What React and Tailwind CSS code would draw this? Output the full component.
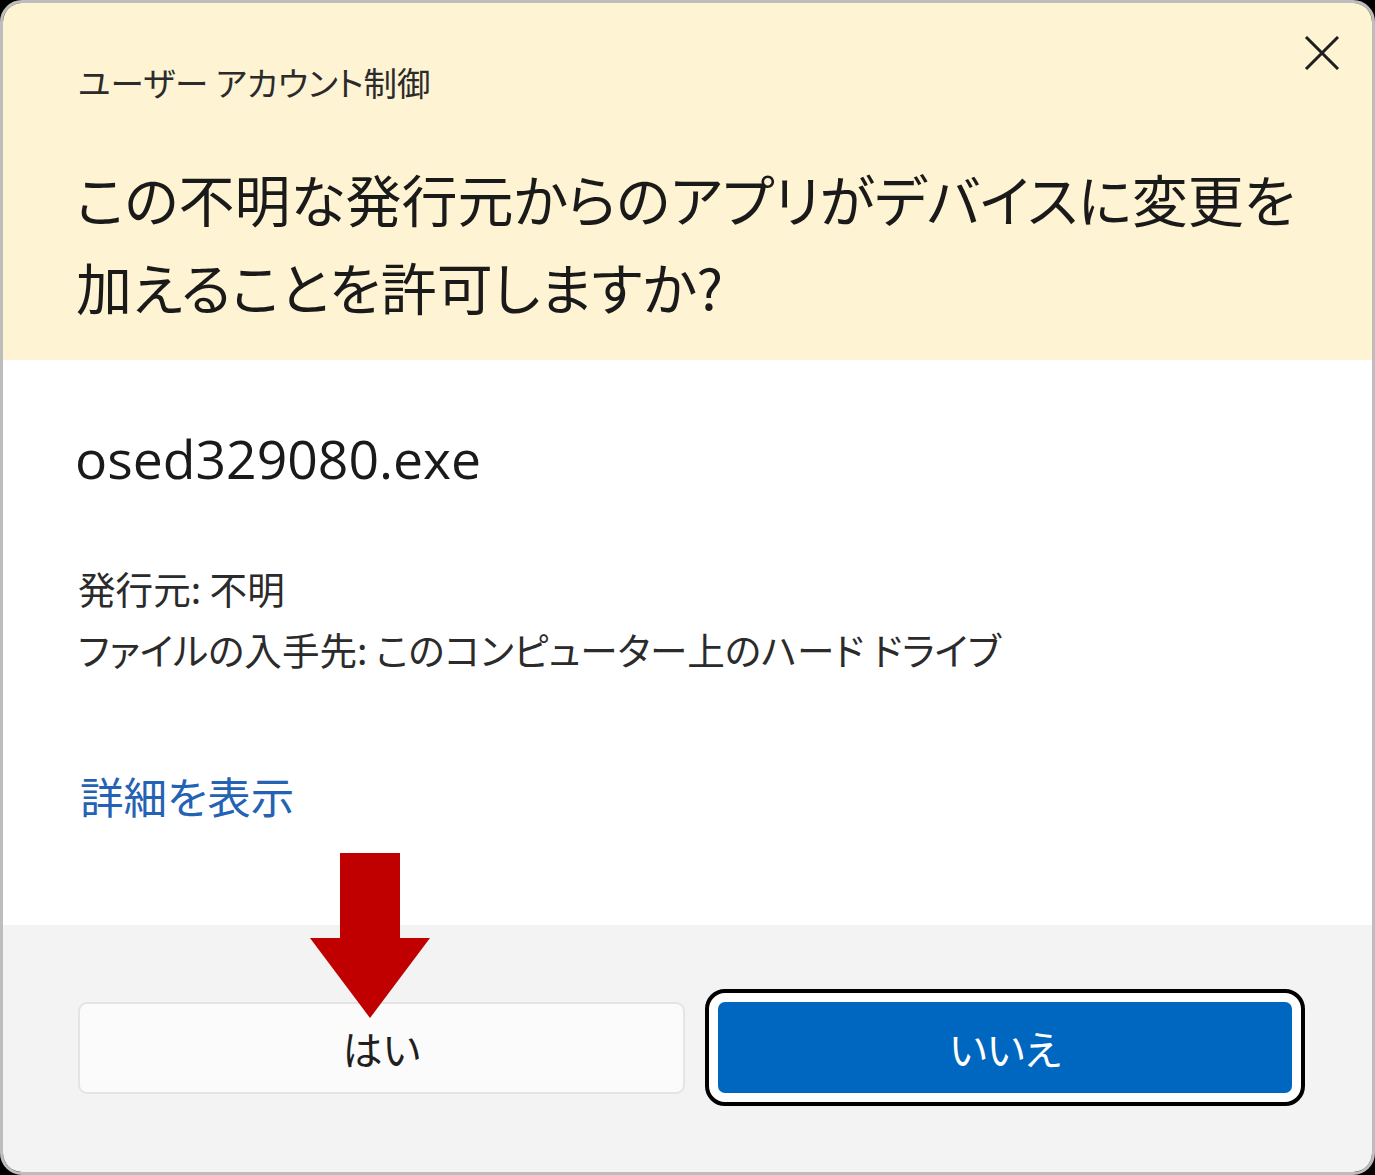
import React from "react";

const jp = "font-['Noto_Sans_CJK_JP',sans-serif] [font-feature-settings:'palt']";

export default function App() {
  return (
    <div className="w-[1375px] h-[1175px] bg-black">
      <div className="relative h-full flex flex-col rounded-[22px] border-[3px] border-[#bdbdbd] overflow-hidden">
        {/* Header */}
        <div className="relative h-[357px] shrink-0 bg-[#fef3d2] pl-[73px] pr-[40px] pt-[57px]">
          <div className={`${jp} pl-[2px] text-[33.5px] leading-[44px] text-[#2b2b2b]`}>ユーザー アカウント制御</div>
          <h1 className={`${jp} mt-[50px] text-[56px] leading-[88px] font-normal text-[#1a1a1a] whitespace-nowrap`}>
            この不明な発行元からのアプリがデバイスに変更を
            <br />
            加えることを許可しますか?
          </h1>
          <button className="absolute right-[31px] top-[32px] w-[38px] h-[36px] flex items-center justify-center">
            <svg width="36" height="34" viewBox="0 0 36 34" fill="none">
              <path d="M2 1L34 33M34 1L2 33" stroke="#1f1f1f" strokeWidth="3" />
            </svg>
          </button>
        </div>

        {/* Body */}
        <div className="flex-1 bg-white pl-[72px] pt-[67px]">
          <div className="font-['Open_Sans',sans-serif] text-[53.5px] leading-[64px] text-[#1a1a1a]">osed329080.exe</div>
          <div className={`${jp} pl-[3px] mt-[66px] text-[37.6px] leading-[61px] text-[#2b2b2b]`}>
            <div>発行元: 不明</div>
            <div>ファイルの入手先: このコンピューター上のハード ドライブ</div>
          </div>
          <div className={`${jp} pl-[5px] mt-[92px] text-[43.5px] leading-[50px] text-[#2463b4]`}>詳細を表示</div>
        </div>

        {/* Footer */}
        <div className="h-[247px] shrink-0 bg-[#f3f3f3] flex items-start pl-[75px] pt-[64px] gap-[20px]">
          <button className={`${jp} mt-[13px] w-[607px] h-[92px] rounded-[9px] border-2 border-[#e4e4e4] bg-[#fbfbfb] text-[40px] text-[#1f1f1f] flex items-center justify-center`}>
            はい
          </button>
          <div className="w-[600px] h-[117px] rounded-[20px] border-[4px] border-black bg-white p-[9px]">
            <button className={`${jp} w-full h-full rounded-[7px] bg-[#0067c0] text-[40px] text-white flex items-center justify-center`}>
              いいえ
            </button>
          </div>
        </div>

        {/* Red arrow annotation */}
        <svg className="absolute left-[307px] top-[850px]" width="120" height="165" viewBox="0 0 120 165">
          <path d="M30 0H90V85H120L60 165L0 85H30Z" fill="#c00000" />
        </svg>
      </div>
    </div>
  );
}
